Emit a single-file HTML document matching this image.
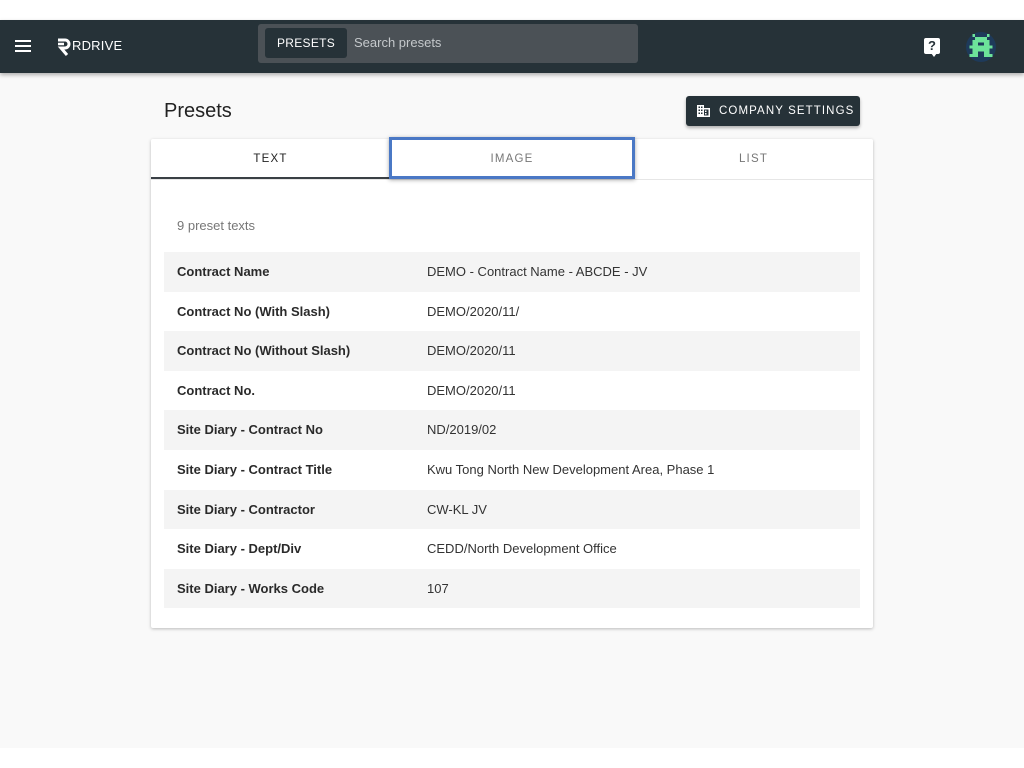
<!DOCTYPE html>
<html><head><meta charset="utf-8"><style>
*{box-sizing:border-box;margin:0;padding:0}
body{width:1024px;height:768px;background:#fff;font-family:"Liberation Sans",Roboto,sans-serif;position:relative;overflow:hidden}
.hdr{position:absolute;top:20px;left:0;width:1024px;height:53px;background:#263238;box-shadow:0 2px 4px rgba(0,0,0,.3);z-index:2}
.main{position:absolute;top:73px;left:0;width:1024px;height:675px;background:#f9f9f9}
.search{position:absolute;left:258px;top:4px;width:380px;height:39px;background:#4b5156;border-radius:3px}
.pbtn{position:absolute;left:7px;top:4px;width:82px;height:30px;background:#263238;border-radius:3px;color:#fff;font-size:12px;line-height:30px;text-align:center;letter-spacing:.3px}
.sph{position:absolute;left:96px;top:11px;color:#c4c8cb;font-size:13px}
.card{position:absolute;left:151px;top:139px;width:722px;height:489px;background:#fff;border-radius:2px;box-shadow:0 1px 3px rgba(0,0,0,.25)}
.tab{position:absolute;top:0;height:40px;line-height:40px;text-align:center;font-size:11.5px;letter-spacing:1.2px;color:#777}
.row{position:absolute;left:13px;width:696px;height:39.6px;font-size:13px;color:#222;line-height:40px}
.row.g{background:#f4f4f4}
.row b{position:absolute;left:13px;font-weight:bold;color:#2a2a2a}
.row span{position:absolute;left:263px;color:#333}
</style></head><body>
<div class="hdr">
 <div style="position:absolute;left:15px;top:20px;width:16px;height:2px;background:#fff;box-shadow:0 5px 0 #fff,0 10px 0 #fff"></div>
 <svg style="position:absolute;left:56px;top:17px" width="16" height="20" viewBox="0 0 16 20"><path d="M2 3h7a4 4 0 0 1 0 8H5l6 7" fill="none" stroke="#fff" stroke-width="3"/><path d="M2 7h6" stroke="#fff" stroke-width="2.5"/></svg>
 <div style="position:absolute;left:72px;top:18px;color:#fff;font-size:13px;letter-spacing:.2px">RDRIVE</div>
 <div class="search"><div class="pbtn">PRESETS</div><div class="sph">Search presets</div></div>
 <div style="position:absolute;left:924px;top:18px;width:16px;height:16px;background:#fff;border-radius:2px;color:#263238;font-size:13px;font-weight:bold;text-align:center;line-height:16px">?</div>
 <div style="position:absolute;left:931px;top:33px;border:3px solid transparent;border-top:4px solid #fff"></div>
 <div style="position:absolute;left:966px;top:12px;width:30px;height:30px;border-radius:50%;background:#1e3a5a"></div>
 <svg style="position:absolute;left:969px;top:14px" width="24" height="26" viewBox="0 0 8 9" shape-rendering="crispEdges"><g fill="#6de39a"><rect x="1" y="0" width="1" height="1"/><rect x="6" y="0" width="1" height="1"/><rect x="2" y="1" width="4" height="1"/><rect x="1" y="2" width="6" height="1"/><rect x="1" y="3" width="2" height="1"/><rect x="5" y="3" width="2" height="1"/><rect x="3" y="3" width="2" height="1" fill="#1e3a5a"/><rect x="0" y="4" width="8" height="1"/><rect x="1" y="5" width="2" height="2"/><rect x="5" y="5" width="2" height="2"/><rect x="3" y="5" width="2" height="1"/><rect x="0" y="7" width="3" height="1"/><rect x="5" y="7" width="3" height="1"/></g></svg>
</div>
<div class="main">
 <div style="position:absolute;left:164px;top:27px;font-size:20px;color:#222">Presets</div>
 <div style="position:absolute;left:686px;top:23px;width:174px;height:30px;background:#263238;border-radius:3px;box-shadow:0 2px 3px rgba(0,0,0,.3);color:#fff;font-size:11.5px;letter-spacing:1.1px;line-height:30px;padding-left:33px">COMPANY SETTINGS
  <svg style="position:absolute;left:11px;top:9px" width="13" height="12" viewBox="0 0 13 12"><path d="M0 0h7v3h6v9H0z" fill="#fff"/><g fill="#263238"><rect x="1.5" y="1.5" width="1.5" height="1.5"/><rect x="4" y="1.5" width="1.5" height="1.5"/><rect x="1.5" y="4.5" width="1.5" height="1.5"/><rect x="4" y="4.5" width="1.5" height="1.5"/><rect x="1.5" y="7.5" width="1.5" height="1.5"/><rect x="4" y="7.5" width="1.5" height="1.5"/><rect x="7" y="4.5" width="4.5" height="6"/></g><g fill="#fff"><rect x="8" y="5.5" width="1.5" height="1.5"/><rect x="8" y="8" width="1.5" height="1.5"/></g></svg>
 </div>
</div>
<div class="card">
 <div style="position:absolute;left:0;top:40px;width:722px;height:1px;background:#e6e6e6"></div>
 <div class="tab" style="left:0;width:239px;color:#222;border-bottom:2px solid #3a4045">TEXT</div>
 <div class="tab" style="left:239px;width:244px">IMAGE</div>
 <div style="position:absolute;left:238px;top:-2px;width:246px;height:42px;border:3px solid #4a78c5;box-shadow:0 1px 4px rgba(0,0,0,.35)"></div>
 <div class="tab" style="left:483px;width:239px">LIST</div>
 <div style="position:absolute;left:26px;top:79px;font-size:13px;color:#777">9 preset texts</div>
 <div class="row g" style="top:113px"><b>Contract Name</b><span>DEMO - Contract Name - ABCDE - JV</span></div>
 <div class="row" style="top:152.6px"><b>Contract No (With Slash)</b><span>DEMO/2020/11/</span></div>
 <div class="row g" style="top:192.2px"><b>Contract No (Without Slash)</b><span>DEMO/2020/11</span></div>
 <div class="row" style="top:231.8px"><b>Contract No.</b><span>DEMO/2020/11</span></div>
 <div class="row g" style="top:271.4px"><b>Site Diary - Contract No</b><span>ND/2019/02</span></div>
 <div class="row" style="top:311px"><b>Site Diary - Contract Title</b><span>Kwu Tong North New Development Area, Phase 1</span></div>
 <div class="row g" style="top:350.6px"><b>Site Diary - Contractor</b><span>CW-KL JV</span></div>
 <div class="row" style="top:390.2px"><b>Site Diary - Dept/Div</b><span>CEDD/North Development Office</span></div>
 <div class="row g" style="top:429.8px"><b>Site Diary - Works Code</b><span>107</span></div>
</div>
</body></html>
